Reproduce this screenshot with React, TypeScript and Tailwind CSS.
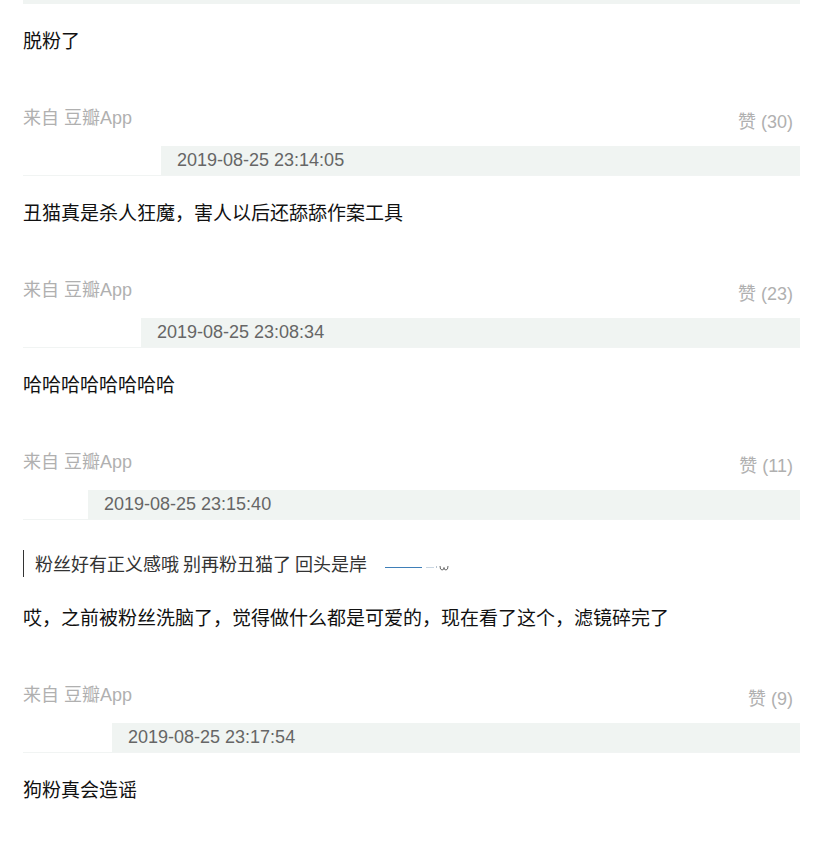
import React from "react";

type Item = {
  text: string;
  likes: number;
  time: string;
  offset: string;
  quote?: boolean;
};

const items: Item[] = [
  { text: "脱粉了", likes: 30, time: "2019-08-25 23:14:05", offset: "ml-[138px]" },
  { text: "丑猫真是杀人狂魔，害人以后还舔舔作案工具", likes: 23, time: "2019-08-25 23:08:34", offset: "ml-[118px]" },
  { text: "哈哈哈哈哈哈哈哈", likes: 11, time: "2019-08-25 23:15:40", offset: "ml-[65px]" },
  { text: "哎，之前被粉丝洗脑了，觉得做什么都是可爱的，现在看了这个，滤镜碎完了", likes: 9, time: "2019-08-25 23:17:54", offset: "ml-[89px]", quote: true },
];

const cjk = "font-['Noto_Sans_CJK_SC','Liberation_Sans',sans-serif]";
const latin = "font-['Liberation_Sans','Noto_Sans_CJK_SC',sans-serif]";

function Bar({ time, offset }: { time: string; offset: string }) {
  return (
    <div className="mt-3 border-b border-[#f1f4f3]">
      <div className={`${offset} ${latin} h-[29px] bg-[#f0f4f2] pl-4 text-[18px] leading-[29px] text-[#666]`}>
        {time}
      </div>
    </div>
  );
}

function Meta({ likes }: { likes: number }) {
  return (
    <div className={`${latin} mt-[52px] flex h-[28px] justify-between pr-[7px] text-[18px] text-[#b0b0b0]`}>
      <div className="h-[24px] overflow-visible leading-[24px] whitespace-nowrap">来自 豆瓣App</div>
      <div className="mt-1 h-[24px] overflow-visible leading-[24px] whitespace-nowrap">赞 ({likes})</div>
    </div>
  );
}

function Quote() {
  return (
    <div className="mt-[30px] flex h-[27px] items-center">
      <div className={`${cjk} h-[27px] border-l border-[#333] pl-[11px] text-[18px] leading-[27px] text-[#333]`}>
        粉丝好有正义感哦 别再粉丑猫了 回头是岸
      </div>
      <svg width="70" height="14" viewBox="0 0 70 14" className="ml-[18px] mt-[6px]">
        <line x1="0" y1="7.5" x2="37" y2="7.5" stroke="#3f7fb8" strokeWidth="1" />
        <line x1="41" y1="7.5" x2="49" y2="7.5" stroke="#c9d6e2" strokeWidth="1" />
        <rect x="51" y="6" width="1" height="2" fill="#b8c4d0" />
        <path d="M55 6 Q55 10 57 10 Q59 10 59 7.5 Q59 10 61 10 Q63 10 63 6" stroke="#666" strokeWidth="1" fill="none" />
      </svg>
    </div>
  );
}

function Text({ children, extra }: { children: React.ReactNode; extra: string }) {
  return <div className={`${cjk} ${extra} h-[28px] text-[19px] leading-[28px] text-[#111]`}>{children}</div>;
}

export default function App() {
  return (
    <div className="min-h-[843px] bg-white">
      <div className="mx-[23px] flex w-[777px] flex-col">
        <div className="h-[4px] bg-[#f0f4f2]" />
        {items.map((it, i) => (
          <div key={i} className="flex flex-col">
            {it.quote && <Quote />}
            <Text extra={it.quote ? "mt-[26px]" : "mt-[22px]"}>{it.text}</Text>
            <Meta likes={it.likes} />
            <Bar time={it.time} offset={it.offset} />
          </div>
        ))}
        <Text extra="mt-[22px]">狗粉真会造谣</Text>
      </div>
    </div>
  );
}
